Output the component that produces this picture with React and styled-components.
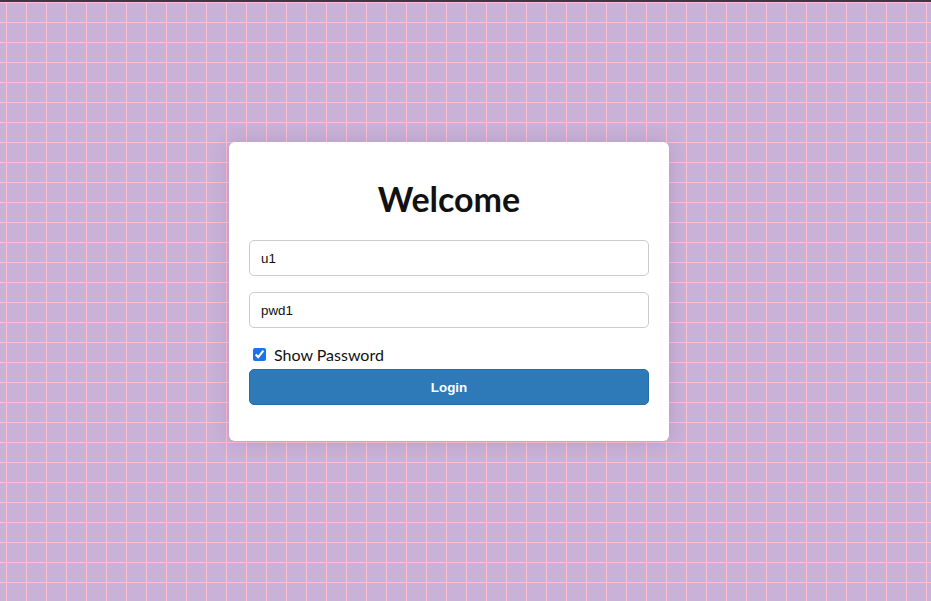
import { useState } from "react";
import styled, { createGlobalStyle } from "styled-components";

const GlobalStyle = createGlobalStyle`
  html, body {
    margin: 0;
    padding: 0;
  }
  body {
    font-family: "Liberation Sans", Arial, sans-serif;
  }
`;

const Page = styled.div`
  box-sizing: border-box;
  height: 601px;
  border-top: 2px solid #3a3846;
  background-color: #c9b1d7;
  background-image:
    linear-gradient(to right, #fdbfd2 1px, transparent 1px),
    linear-gradient(to bottom, #fdbfd2 1px, transparent 1px);
  background-size: 20px 20px;
  background-position: 6px 0px;
  display: flex;
  align-items: center;
  justify-content: center;
  padding: 0 33px 20px 0;
`;

const Card = styled.form`
  box-sizing: border-box;
  width: 440px;
  height: 299px;
  background: #ffffff;
  border-radius: 6px;
  box-shadow: 0 0 18px rgba(90, 60, 100, 0.18);
  padding: 20px;
  display: flex;
  flex-direction: column;
`;

const Title = styled.h1`
  margin: 16px 0 20px;
  text-align: center;
  font-family: "Lato", "Noto Sans", sans-serif;
  font-weight: 700;
  font-size: 34px;
  line-height: 42px;
  color: #111;
`;

const Field = styled.input`
  box-sizing: border-box;
  width: 100%;
  height: 36px;
  margin-bottom: 16px;
  padding: 0 11px;
  border: 1px solid #cccccc;
  border-radius: 5px;
  font-family: "Liberation Sans", Arial, sans-serif;
  font-size: 13.33px;
  color: #111;
  outline: none;
`;

const CheckRow = styled.label`
  display: flex;
  align-items: center;
  height: 20px;
  margin-bottom: 5px;
  font-family: "Lato", "Noto Sans", sans-serif;
  font-size: 16px;
  color: #111;

  input {
    width: 13px;
    height: 13px;
    margin: 0 8px 0 4px;
    accent-color: #1a73e8;
  }
`;

const LoginButton = styled.button`
  box-sizing: border-box;
  width: 100%;
  height: 36px;
  border: 1px solid #2a6ca4;
  border-radius: 5px;
  background: #2e7ab8;
  color: #ffffff;
  font-family: "Liberation Sans", Arial, sans-serif;
  font-weight: 700;
  font-size: 13.33px;
`;

export default function App() {
  const [user, setUser] = useState("u1");
  const [pwd, setPwd] = useState("pwd1");
  const [show, setShow] = useState(true);

  return (
    <>
      <GlobalStyle />
      <Page>
        <Card onSubmit={(e) => e.preventDefault()}>
          <Title>Welcome</Title>
          <Field value={user} onChange={(e) => setUser(e.target.value)} />
          <Field
            type={show ? "text" : "password"}
            value={pwd}
            onChange={(e) => setPwd(e.target.value)}
          />
          <CheckRow>
            <input type="checkbox" checked={show} onChange={() => setShow(!show)} />
            Show Password
          </CheckRow>
          <LoginButton type="submit">Login</LoginButton>
        </Card>
      </Page>
    </>
  );
}
